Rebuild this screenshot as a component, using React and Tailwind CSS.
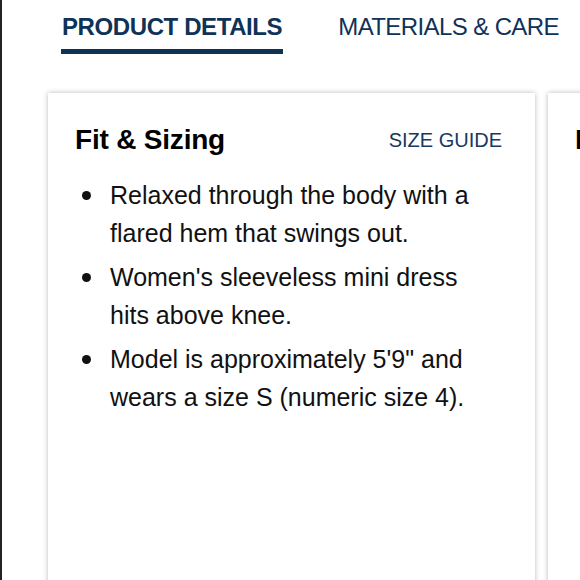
export default function App() {
  const items = [
    'Relaxed through the body with a flared hem that swings out.',
    "Women's sleeveless mini dress hits above knee.",
    'Model is approximately 5\'9" and wears a size S (numeric size 4).',
  ]

  return (
    <div className="h-[580px] w-[580px] overflow-hidden bg-white border-l-2 border-[#222]" style={{ fontFamily: '"Liberation Sans", Arial, sans-serif' }}>
      {/* Tabs */}
      <div className="flex items-start gap-[55px] whitespace-nowrap pl-[59px] pt-[12px]">
        <div className="flex flex-col">
          <span className="px-[1px] text-[24px] font-bold leading-[30px] tracking-[-0.4px] text-[#0f3257]">PRODUCT DETAILS</span>
          <div className="mt-[7px] h-[5px] w-full bg-[#0f3257]" />
        </div>
        <span className="text-[24px] leading-[30px] tracking-[-0.6px] text-[#0f3257]">MATERIALS &amp; CARE</span>
      </div>

      {/* Cards */}
      <div className="mt-[39px] flex gap-[13px] pl-[46px]">
        <div className="h-[520px] w-[487px] shrink-0 bg-white pl-[27px] pr-[33px] pt-[26px] shadow-[0_0_5px_rgba(0,0,0,0.28)]">
          <div className="flex items-center justify-between">
            <h2 className="text-[28px] font-bold tracking-[-0.2px] text-black">Fit &amp; Sizing</h2>
            <a className="text-[20px] text-[#163a5f]">SIZE GUIDE</a>
          </div>
          <ul className="mt-[15px] flex flex-col gap-[6px] pl-[7px]">
            {items.map((t) => (
              <li key={t} className="flex gap-[19px] text-[25px] leading-[38px] text-[#111]">
                <span className="mt-[15px] h-[9px] w-[9px] shrink-0 rounded-full bg-[#111]" />
                <span className="max-w-[372px]">{t}</span>
              </li>
            ))}
          </ul>
        </div>
        <div className="h-[520px] w-[300px] shrink-0 bg-white px-[27px] pt-[26px] shadow-[0_0_5px_rgba(0,0,0,0.28)]">
          <h2 className="text-[28px] font-bold text-black">Fabric</h2>
        </div>
      </div>
    </div>
  )
}
